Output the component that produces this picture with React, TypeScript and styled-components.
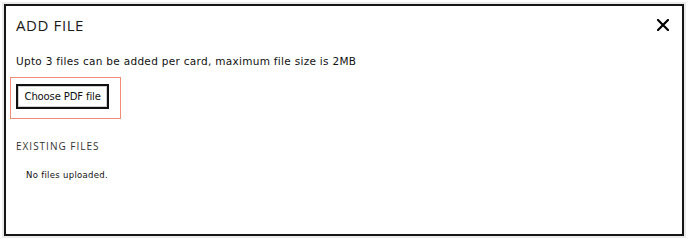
import React from "react";
import styled, { createGlobalStyle } from "styled-components";

const Global = createGlobalStyle`
  html, body { margin: 0; padding: 0; background: #ffffff; }
  #root { width: 690px; height: 245px; }
`;

const Modal = styled.div`
  box-sizing: border-box;
  margin: 4px 0 0 4px;
  width: 680px;
  height: 232px;
  border: 2px solid #151515;
  box-shadow: 0 0 0 2px #ececec;
  background: #fff;
  display: flex;
  flex-direction: column;
  padding: 0 10px;
`;

const Header = styled.div`
  display: flex;
  align-items: center;
  justify-content: space-between;
  height: 40px;
`;

const Title = styled.h2`
  margin: -2px 0 0 0;
  font-family: "Open Sans", sans-serif;
  font-weight: 400;
  font-size: 15px;
  letter-spacing: 0.6px;
  color: #1a1a1a;
`;

const CloseButton = styled.button`
  border: 0;
  background: none;
  padding: 0;
  margin: -2px 3px 0 0;
  width: 12px;
  height: 12px;
  display: flex;
  cursor: pointer;
`;

const Note = styled.p`
  margin: 9px 0 0 0;
  font-family: "DejaVu Sans", sans-serif;
  font-size: 10.5px;
  letter-spacing: 0.3px;
  color: #111;
`;

const Highlight = styled.div`
  align-self: flex-start;
  margin: 10px 0 0 -6px;
  padding: 5.5px 11.5px 9.5px 4.5px;
  border: 1.5px solid #f28b7a;
`;

const FileButton = styled.button`
  box-sizing: border-box;
  height: 25px;
  padding: 0 6px 0 7px;
  border: 2px solid #111;
  box-shadow: inset 0 0 0 1px #d0d0d0;
  background: #fff;
  font-family: "DejaVu Sans Condensed", "DejaVu Sans", sans-serif;
  font-size: 11.2px;
  letter-spacing: -0.15px;
  color: #111;
  display: flex;
  align-items: center;
`;

const SectionLabel = styled.h3`
  margin: 20px 0 0 0;
  font-family: "Open Sans", sans-serif;
  font-weight: 400;
  font-size: 10px;
  letter-spacing: 1px;
  color: #333;
`;

const Empty = styled.p`
  margin: 17px 0 0 10px;
  font-family: "DejaVu Sans", sans-serif;
  font-size: 8.5px;
  letter-spacing: 0.3px;
  color: #111;
`;

export default function App() {
  return (
    <>
      <Global />
      <Modal>
        <Header>
          <Title>ADD FILE</Title>
          <CloseButton aria-label="Close">
            <svg width="12" height="12" viewBox="0 0 12 12">
              <path d="M1 1 L11 11 M11 1 L1 11" stroke="#000" strokeWidth="2.2" strokeLinecap="square" />
            </svg>
          </CloseButton>
        </Header>
        <Note>Upto 3 files can be added per card, maximum file size is 2MB</Note>
        <Highlight>
          <FileButton>Choose PDF file</FileButton>
        </Highlight>
        <SectionLabel>EXISTING FILES</SectionLabel>
        <Empty>No files uploaded.</Empty>
      </Modal>
    </>
  );
}
